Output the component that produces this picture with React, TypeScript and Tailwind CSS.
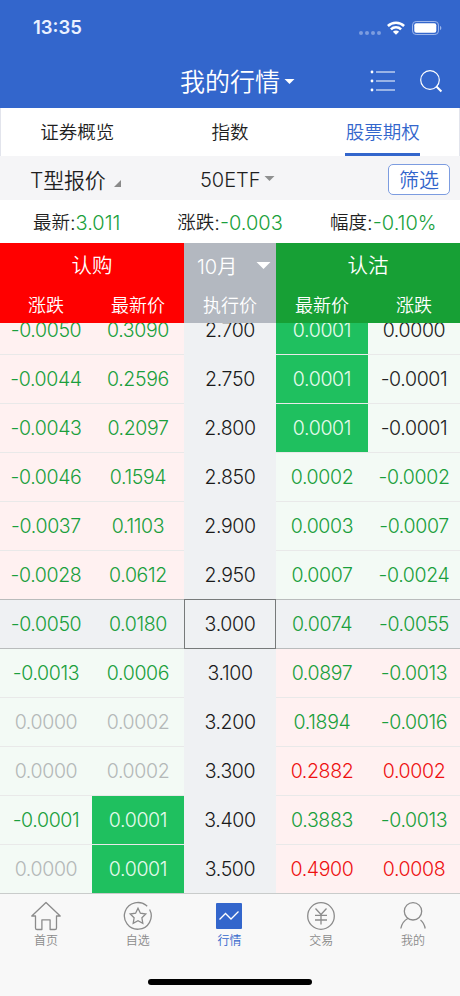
import type { ReactNode } from 'react';

type Tone = 'g' | 'r' | 'n' | 'k' | 'w';
type Cell = [string, Tone];
type Row = { l: [Cell, Cell]; strike: string; r: [Cell, Cell]; left: string; right: string; active?: boolean };

const tones: Record<Tone, string> = {
  g: 'text-[#1a9f3c]',
  r: 'text-[#ee1111]',
  n: 'text-[#b4b8b8]',
  k: 'text-[#222222]',
  w: 'text-[#e6fbed] bg-[#1fc05f]',
};

const PINK = 'bg-[#fff1f1]';
const MINT = 'bg-[#f3faf5]';
const GREY = 'bg-[#eff1f3]';

const rows: Row[] = [
  { l: [['-0.0050', 'g'], ['0.3090', 'g']], strike: '2.700', r: [['0.0001', 'w'], ['0.0000', 'k']], left: PINK, right: MINT },
  { l: [['-0.0044', 'g'], ['0.2596', 'g']], strike: '2.750', r: [['0.0001', 'w'], ['-0.0001', 'k']], left: PINK, right: MINT },
  { l: [['-0.0043', 'g'], ['0.2097', 'g']], strike: '2.800', r: [['0.0001', 'w'], ['-0.0001', 'k']], left: PINK, right: MINT },
  { l: [['-0.0046', 'g'], ['0.1594', 'g']], strike: '2.850', r: [['0.0002', 'g'], ['-0.0002', 'g']], left: PINK, right: MINT },
  { l: [['-0.0037', 'g'], ['0.1103', 'g']], strike: '2.900', r: [['0.0003', 'g'], ['-0.0007', 'g']], left: PINK, right: MINT },
  { l: [['-0.0028', 'g'], ['0.0612', 'g']], strike: '2.950', r: [['0.0007', 'g'], ['-0.0024', 'g']], left: PINK, right: MINT },
  { l: [['-0.0050', 'g'], ['0.0180', 'g']], strike: '3.000', r: [['0.0074', 'g'], ['-0.0055', 'g']], left: GREY, right: GREY, active: true },
  { l: [['-0.0013', 'g'], ['0.0006', 'g']], strike: '3.100', r: [['0.0897', 'g'], ['-0.0013', 'g']], left: MINT, right: PINK },
  { l: [['0.0000', 'n'], ['0.0002', 'n']], strike: '3.200', r: [['0.1894', 'g'], ['-0.0016', 'g']], left: MINT, right: PINK },
  { l: [['0.0000', 'n'], ['0.0002', 'n']], strike: '3.300', r: [['0.2882', 'r'], ['0.0002', 'r']], left: MINT, right: PINK },
  { l: [['-0.0001', 'g'], ['0.0001', 'w']], strike: '3.400', r: [['0.3883', 'g'], ['-0.0013', 'g']], left: MINT, right: PINK },
  { l: [['0.0000', 'n'], ['0.0001', 'w']], strike: '3.500', r: [['0.4900', 'r'], ['0.0008', 'r']], left: MINT, right: PINK },
];

function Pair({ cells, bg, line }: { cells: [Cell, Cell]; bg: string; line: string }) {
  return (
    <div className={`grid w-[184px] shrink-0 grid-cols-2 border-b ${line} ${bg}`}>
      {cells.map(([text, tone], i) => (
        <div key={i} className={`flex items-center justify-center pt-[2px] ${tones[tone]}`}>
          {text}
        </div>
      ))}
    </div>
  );
}

function QuoteRow({ row, beforeActive }: { row: Row; beforeActive: boolean }) {
  const line = row.active || beforeActive ? 'border-[#b9bcbc]' : 'border-[#e9e9e9]';
  return (
    <div className="flex h-[49px] shrink-0 text-[19.5px] tracking-[-0.35px]">
      <Pair cells={row.l} bg={row.left} line={line} />
      <div
        className={`flex w-[92px] items-center justify-center text-[#1a1a1a] ${GREY} ${
          row.active ? '-mt-px h-[50px] border border-[#777a7a] pt-[2px]' : 'pt-px'
        }`}
      >
        {row.strike}
      </div>
      <Pair cells={row.r} bg={row.right} line={line} />
    </div>
  );
}

function Caret({ className }: { className: string }) {
  return (
    <svg viewBox="0 0 12 6" className={className} fill="currentColor">
      <path d="M0 0h12L6 6z" />
    </svg>
  );
}

function Stat({ label, value }: { label: string; value: string }) {
  return (
    <div className="flex items-center justify-center pt-[2px] text-[#1f1f1f]">
      <span className="text-[18.5px]">{label}</span>
      <span className="text-[20px]">:</span>
      <span className="text-[20px] text-[#1a9f3c]">{value}</span>
    </div>
  );
}

function Tab({ label, active, children }: { label: string; active?: boolean; children: ReactNode }) {
  return (
    <div className={`flex flex-1 flex-col items-center pt-[7px] ${active ? 'text-[#3366cc]' : 'text-[#8b8b8b]'}`}>
      <svg viewBox="0 0 30 30" className="size-[30px]" fill="none" stroke="currentColor" strokeWidth="1.3">
        {children}
      </svg>
      <span className="mt-[2px] text-[12px] leading-4">{label}</span>
    </div>
  );
}

export default function App() {
  return (
    <div className="flex h-[996px] w-[460px] flex-col overflow-hidden bg-[#f8f8f8] font-['Inter','Noto_Sans_CJK_SC',sans-serif] font-[350]">
      <header className="h-[108px] shrink-0 bg-[#3366cc] text-white">
        <div className="flex h-[56px] items-center pr-[18px] pl-[33px]">
          <span className="flex-1 text-[18.5px] font-semibold text-[#eaf1ff]">13:35</span>
          <div className="mt-[9px] mr-[6px] flex gap-[2px]">
            {[0, 1, 2, 3].map((i) => (
              <i key={i} className="size-1 rounded-full bg-[#7d9de0]" />
            ))}
          </div>
          <svg viewBox="0 0 18 14" className="mr-[7px] h-[14px] w-[18px]" fill="none" stroke="white" strokeWidth="2.5">
            <path d="M.9 5a11.5 11.5 0 0 1 16.2 0M3.9 8.4a7.2 7.2 0 0 1 10.2 0" />
            <path d="M5.9 10.7a4.4 4.4 0 0 1 6.2 0L9 13.8z" fill="white" stroke="none" />
          </svg>
          <svg viewBox="0 0 30 14" className="h-[14px] w-[30px]">
            <rect x=".5" y=".5" width="26" height="13" rx="3.6" fill="none" stroke="#9db6ea" />
            <rect x="2.3" y="2.3" width="22" height="9.4" rx="2" fill="white" />
            <path d="M28 4.8q1.4.8 1.4 2.2T28 9.2z" fill="#9db6ea" />
          </svg>
        </div>
        <div className="flex h-[50px] items-center pl-[180px]">
          <span className="pt-[3px] text-[25px]">我的行情</span>
          <Caret className="ml-[4px] h-[5px] w-[11px]" />
          <svg viewBox="0 0 26 22" className="ml-[75px] h-[22px] w-[26px]" fill="none" stroke="white" strokeWidth="1.2">
            <path d="M6 2h19M6 11h19M6 20h19" />
            <g fill="white" stroke="none">
              <circle cx="2" cy="2" r="1.4" />
              <circle cx="2" cy="11" r="1.4" />
              <circle cx="2" cy="20" r="1.4" />
            </g>
          </svg>
          <svg viewBox="0 0 24 24" className="ml-[24px] size-6" fill="none" stroke="white" strokeWidth="1.2">
            <circle cx="10" cy="11" r="9.3" />
            <path d="m16.2 17.3 5.2 5.2" strokeWidth="2" />
          </svg>
        </div>
      </header>

      <nav className="grid h-[48px] shrink-0 grid-cols-3 border-x border-[#e2e4ec] bg-white text-[18.5px] text-[#1f1f1f]">
        <div className="flex items-center justify-center pt-[2px]">证券概览</div>
        <div className="flex items-center justify-center pt-[2px]">指数</div>
        <div className="flex justify-center">
          <div className="flex h-full w-[75px] items-center justify-center border-b-[3px] border-[#3366cc] pt-[5px] whitespace-nowrap text-[#3366cc]">
            股票期权
          </div>
        </div>
      </nav>

      <div className="flex h-[44px] shrink-0 items-center bg-[#f5f5f7] pt-[3px] text-[20px] text-[#1f1f1f]">
        <span className="ml-[30px] w-[76px] pt-[2px] text-[21px] tracking-[-0.2px] whitespace-nowrap">T型报价</span>
        <svg viewBox="0 0 8 8" className="mt-[7px] ml-[8px] size-[7px]" fill="#8a8a8a">
          <path d="M8 0v8H0z" />
        </svg>
        <span className="ml-[79px] w-[61px]">50ETF</span>
        <Caret className="ml-[3px] h-[5px] w-[11px] -translate-y-px text-[#8f9090]" />
        <div className="ml-[113px] flex h-[31px] w-[62px] items-center justify-center rounded-[5px] border border-[#7c9ce0] bg-white pt-[3px] text-[#3366cc]">
          筛选
        </div>
      </div>

      <div className="grid h-[43px] shrink-0 grid-cols-3 bg-white">
        <Stat label="最新" value="3.011" />
        <Stat label="涨跌" value="-0.003" />
        <Stat label="幅度" value="-0.10%" />
      </div>

      <div className="flex h-[80px] shrink-0 text-[18px] text-white">
        <div className="w-[184px] bg-[#ff0000]">
          <div className="flex h-[44px] items-center justify-center pt-[3px] text-[20.5px]">认购</div>
          <div className="grid h-[36px] grid-cols-2 items-center text-center">
            <span>涨跌</span>
            <span>最新价</span>
          </div>
        </div>
        <div className="w-[92px] bg-[#b3b8c0]">
          <div className="flex h-[44px] items-center pl-[13px] text-[20px]">
            <span className="w-[42px] pt-[3px] whitespace-nowrap">10月</span>
            <Caret className="ml-[17px] h-[7px] w-[15px]" />
          </div>
          <div className="flex h-[36px] items-center justify-center">执行价</div>
        </div>
        <div className="w-[184px] bg-[#17a035]">
          <div className="flex h-[44px] items-center justify-center pt-[3px] text-[20.5px]">认沽</div>
          <div className="grid h-[36px] grid-cols-2 items-center text-center">
            <span>最新价</span>
            <span>涨跌</span>
          </div>
        </div>
      </div>

      <main className="flex h-[571px] shrink-0 flex-col justify-end overflow-hidden">
        {rows.map((row, i) => (
          <QuoteRow key={row.strike} row={row} beforeActive={!!rows[i + 1]?.active} />
        ))}
      </main>

      <footer className="-mt-px flex h-[103px] shrink-0 flex-col border-t border-[#c9cccb] bg-[#f8f8f8]">
        <div className="flex h-[58px] pr-px">
          <Tab label="首页">
            <path d="M15 1.500.8 15H4.500v11.900q0 1.600 1.600 1.600h4.800v-9.700h8.200v9.700h4.800q1.600 0 1.600-1.600V15h3.700z" strokeLinejoin="round" />
          </Tab>
          <Tab label="自选">
            <path d="M24.200 5.300A13.400 13.400 0 1 0 26.600 8.500M23 4.200A13.400 13.400 0 0 0 15 1.600" />
            <path d="m15 7.200 2.400 5 5.400.8-3.900 3.800.9 5.500-4.800-2.600-4.800 2.600.9-5.500-3.900-3.800 5.400-.8z" />
          </Tab>
          <Tab label="行情" active>
            <rect x="2" y="2" width="26" height="26" rx="1" fill="currentColor" stroke="none" />
            <path d="m5.500 18.500 6-6 5.500 5.500 7.500-7.500" stroke="white" />
          </Tab>
          <Tab label="交易">
            <circle cx="15" cy="15" r="13.300" />
            <path d="m9.500 7.500 5.500 6 5.500-6M9 14.300h12M9 19h12M15 13.500V23.500" />
          </Tab>
          <Tab label="我的">
            <circle cx="15" cy="10.300" r="8.700" />
            <path d="M2.800 27.500q1.200-7 7.400-10.300M27.200 27.500q-1.200-5.600-4.700-8.400" />
          </Tab>
        </div>
        <div className="mx-auto mt-[27px] h-[6px] w-[164px] shrink-0 rounded-full bg-black" />
      </footer>
    </div>
  );
}
